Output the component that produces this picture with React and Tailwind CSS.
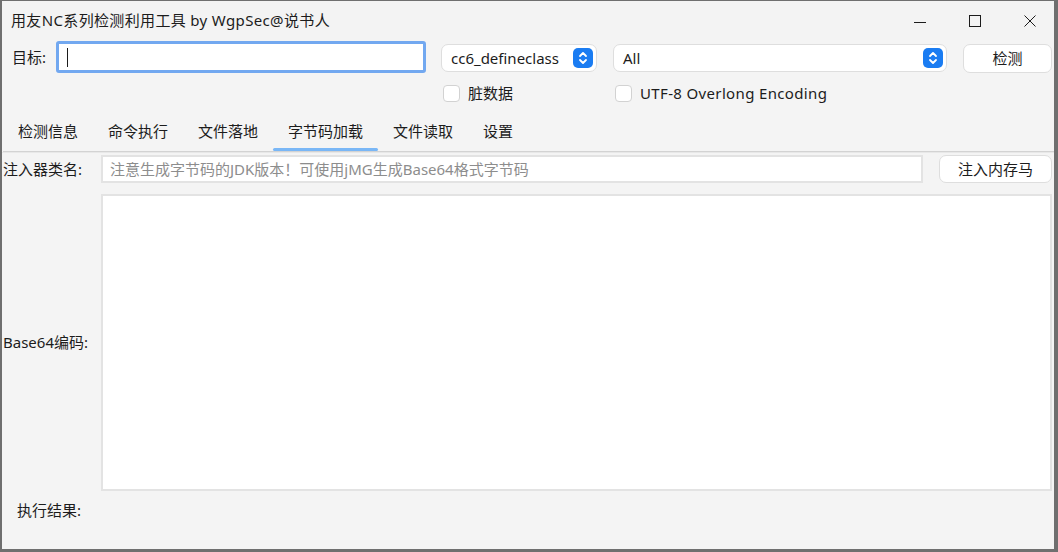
import { useState } from 'react'

const font = "font-['Noto_Sans','Noto_Sans_CJK_SC',sans-serif]"

function SpinArrows() {
  return (
    <div className="w-[20px] h-[20px] rounded-[5px] bg-[#1a7cf2] flex items-center justify-center">
      <svg width="12" height="16" viewBox="0 0 12 16" fill="none" stroke="white" strokeWidth="1.8" strokeLinecap="round" strokeLinejoin="round">
        <path d="M3 6 L6 3 L9 6" />
        <path d="M3 10 L6 13 L9 10" />
      </svg>
    </div>
  )
}

function Combo({ value, width }) {
  return (
    <div className={`${width} h-[28px] mt-[2px] bg-white border border-[#dedede] rounded-[7px] flex items-center pl-[9px] pr-[3px]`}>
      <span className="flex-1 leading-none">{value}</span>
      <SpinArrows />
    </div>
  )
}

function Check({ label, className = '' }) {
  return (
    <div className="flex items-center ml-[2px]">
      <div className="w-[17px] h-[17px] rounded-[4px] border-[1.5px] border-[#d2d2d2] bg-white" />
      <span className={`ml-[8px] leading-none ${className}`}>{label}</span>
    </div>
  )
}

function WinButton({ children }) {
  return <div className="w-[55px] h-[39px] flex items-center justify-center">{children}</div>
}

const tabs = ['检测信息', '命令执行', '文件落地', '字节码加载', '文件读取', '设置']

export default function App() {
  const [active, setActive] = useState(3)

  return (
    <div className={`${font} w-[1058px] h-[552px] bg-[#f4f4f4] text-[15px] text-[#1c1c1c] border-l-2 border-t border-r-[4px] border-b-[3px] border-[#6f6f6f] flex flex-col overflow-hidden`}>
      {/* title bar */}
      <div className="h-[39px] flex items-center pl-[9px] bg-[#f3f3f3]">
        <span className="flex-1 tracking-[0.35px]">用友NC系列检测利用工具 by WgpSec@说书人</span>
        <div className="flex mr-[-3px]">
          <WinButton>
            <svg width="12" height="12" viewBox="0 0 12 12" stroke="#1c1c1c" strokeWidth="1"><path d="M0 7.5 H12" /></svg>
          </WinButton>
          <WinButton>
            <svg width="12" height="12" viewBox="0 0 12 12" fill="none" stroke="#1c1c1c" strokeWidth="1"><rect x="0.5" y="0.5" width="11" height="11" /></svg>
          </WinButton>
          <WinButton>
            <svg width="12" height="12" viewBox="0 0 12 12" stroke="#1c1c1c" strokeWidth="1"><path d="M0.5 0.5 L11.5 11.5 M11.5 0.5 L0.5 11.5" /></svg>
          </WinButton>
        </div>
      </div>

      {/* target row */}
      <div className="mt-[1px] h-[32px] flex items-center pl-[10px]">
        <span className="w-[44px]">目标:</span>
        <div className="w-[370px] h-[32px] bg-white border-[3px] border-[#72a8f0] rounded-[3px] flex items-center pl-[8px]">
          <div className="w-[1px] h-[19px] bg-[#1c1c1c]" />
        </div>
        <div className="ml-[15px]">
          <Combo value="cc6_defineclass" width="w-[156px]" />
        </div>
        <div className="ml-[16px]">
          <Combo value="All" width="w-[334px]" />
        </div>
        <button className="ml-[16px] mt-[2px] w-[89px] h-[29px] bg-white border border-[#dedede] rounded-[7px]">检测</button>
      </div>

      {/* options */}
      <div className="mt-[12px] h-[17px] flex items-center">
        <div className="w-[439px]" />
        <div className="w-[172px]"><Check label="脏数据" /></div>
        <Check label="UTF-8 Overlong Encoding" className="tracking-[0.35px]" />
      </div>

      {/* tabs */}
      <div className="mt-[16px] ml-[1px] flex border-b border-[#d3d3d3]">
        {tabs.map((t, i) => (
          <div key={t} onClick={() => setActive(i)} className="relative h-[33px] px-[15px] pb-[6px] flex items-center cursor-default">
            {t}
            {i === active && <div className="absolute left-0 right-0 bottom-0 h-[3px] rounded-full bg-[#7ab7f6]" />}
          </div>
        ))}
      </div>
      <div className="h-[1px] bg-[#e8e8e8]" />

      {/* class name row */}
      <div className="mt-[2px] h-[28px] flex items-center pl-[1px]">
        <span className="w-[98px]">注入器类名:</span>
        <div className="w-[822px] h-[28px] bg-white border-2 border-[#e3e3e3] flex items-center pl-[7px] text-[#8d8d8d]">
          注意生成字节码的JDK版本！可使用jMG生成Base64格式字节码
        </div>
        <button className="ml-[16px] w-[113px] h-[28px] bg-white border border-[#dedede] rounded-[7px]">注入内存马</button>
      </div>

      {/* base64 */}
      <div className="mt-[11px] h-[297px] flex items-center pl-[1px]">
        <span className="w-[98px]">Base64编码:</span>
        <div className="w-[951px] h-[297px] bg-white border-2 border-[#e3e3e3]" />
      </div>

      {/* result */}
      <div className="h-[38px] flex items-center pl-[15px]">
        <span>执行结果:</span>
      </div>
    </div>
  )
}
